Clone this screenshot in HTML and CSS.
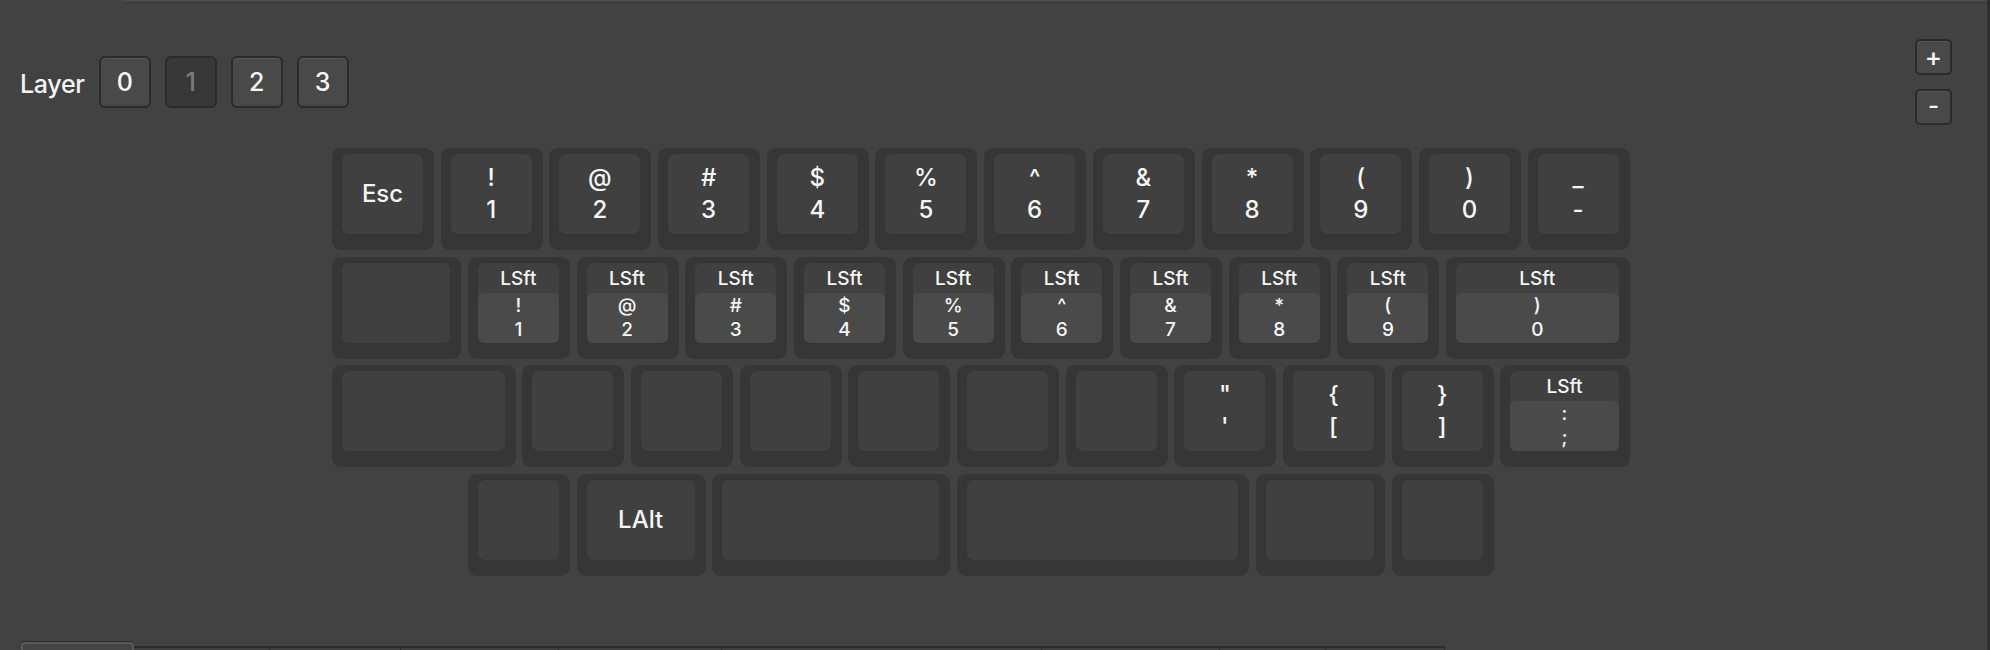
FILE: index.html
```html
<!DOCTYPE html>
<html>
<head>
<meta charset="utf-8">
<link rel="stylesheet" href="styles.css">
</head>
<body>
<div class="app">
  <div class="topline"></div>
  <header class="toolbar">
    <div class="layers">
      <span class="layer-label">Layer</span>
      <div class="layer-btn">0</div>
      <div class="layer-btn active">1</div>
      <div class="layer-btn">2</div>
      <div class="layer-btn">3</div>
    </div>
    <div class="zoom-btns">
      <div class="zbtn">+</div>
      <div class="zbtn minus">-</div>
    </div>
  </header>

  <div class="keyboard">
    <div class="row">
      <div class="key w100"><div class="cap"><span>Esc</span></div></div>
      <div class="key w100"><div class="cap"><span>!</span><span>1</span></div></div>
      <div class="key w100"><div class="cap"><span>@</span><span>2</span></div></div>
      <div class="key w100"><div class="cap"><span>#</span><span>3</span></div></div>
      <div class="key w100"><div class="cap"><span>$</span><span>4</span></div></div>
      <div class="key w100"><div class="cap"><span>%</span><span>5</span></div></div>
      <div class="key w100"><div class="cap"><span>^</span><span>6</span></div></div>
      <div class="key w100"><div class="cap"><span>&amp;</span><span>7</span></div></div>
      <div class="key w100"><div class="cap"><span>*</span><span>8</span></div></div>
      <div class="key w100"><div class="cap"><span>(</span><span>9</span></div></div>
      <div class="key w100"><div class="cap"><span>)</span><span>0</span></div></div>
      <div class="key w100"><div class="cap"><span>_</span><span>-</span></div></div>
    </div>
    <div class="row">
      <div class="key w125"><div class="cap"></div></div>
      <div class="key w100"><div class="cap hold"><div class="hold-label">LSft</div><div class="tap"><span>!</span><span>1</span></div></div></div>
      <div class="key w100"><div class="cap hold"><div class="hold-label">LSft</div><div class="tap"><span>@</span><span>2</span></div></div></div>
      <div class="key w100"><div class="cap hold"><div class="hold-label">LSft</div><div class="tap"><span>#</span><span>3</span></div></div></div>
      <div class="key w100"><div class="cap hold"><div class="hold-label">LSft</div><div class="tap"><span>$</span><span>4</span></div></div></div>
      <div class="key w100"><div class="cap hold"><div class="hold-label">LSft</div><div class="tap"><span>%</span><span>5</span></div></div></div>
      <div class="key w100"><div class="cap hold"><div class="hold-label">LSft</div><div class="tap"><span>^</span><span>6</span></div></div></div>
      <div class="key w100"><div class="cap hold"><div class="hold-label">LSft</div><div class="tap"><span>&amp;</span><span>7</span></div></div></div>
      <div class="key w100"><div class="cap hold"><div class="hold-label">LSft</div><div class="tap"><span>*</span><span>8</span></div></div></div>
      <div class="key w100"><div class="cap hold"><div class="hold-label">LSft</div><div class="tap"><span>(</span><span>9</span></div></div></div>
      <div class="key w175"><div class="cap hold"><div class="hold-label">LSft</div><div class="tap"><span>)</span><span>0</span></div></div></div>
    </div>
    <div class="row">
      <div class="key w175"><div class="cap"></div></div>
      <div class="key w100"><div class="cap"></div></div>
      <div class="key w100"><div class="cap"></div></div>
      <div class="key w100"><div class="cap"></div></div>
      <div class="key w100"><div class="cap"></div></div>
      <div class="key w100"><div class="cap"></div></div>
      <div class="key w100"><div class="cap"></div></div>
      <div class="key w100"><div class="cap"><span>"</span><span>'</span></div></div>
      <div class="key w100"><div class="cap"><span>{</span><span>[</span></div></div>
      <div class="key w100"><div class="cap"><span>}</span><span>]</span></div></div>
      <div class="key w125"><div class="cap hold"><div class="hold-label">LSft</div><div class="tap"><span>:</span><span>;</span></div></div></div>
    </div>
    <div class="row row-offset">
      <div class="key w100"><div class="cap"></div></div>
      <div class="key w125"><div class="cap"><span>LAlt</span></div></div>
      <div class="key w225"><div class="cap"></div></div>
      <div class="key w275"><div class="cap"></div></div>
      <div class="key w125"><div class="cap"></div></div>
      <div class="key w100"><div class="cap"></div></div>
    </div>
  </div>

  <div class="tabs">
    <div class="tab selected t1"></div>
    <div class="tab t2"></div>
    <div class="tab t3"></div>
    <div class="tab t4"></div>
    <div class="tab t5"></div>
    <div class="tab t6"></div>
    <div class="tab t7"></div>
    <div class="tab t8"></div>
    <div class="tab t9"></div>
  </div>
</div>
</body>
</html>
```

FILE: styles.css
```css
* { box-sizing: border-box; }

html, body {
  margin: 0;
  padding: 0;
  background: #424242;
  overflow: hidden;
}

body {
  font-family: "Inter", "Liberation Sans", sans-serif;
  color: #f2f2f2;
}

.app {
  --u: 108.7px;
  --g: 6.7px;
  width: 1990px;
  height: 650px;
  overflow: hidden;
  border-right: 3px solid #2f2f2f;
  display: flex;
  flex-direction: column;
}

.topline {
  margin-left: 123px;
  height: 3px;
  background: #4a4a4a;
  border-bottom: 1px solid #383838;
  flex: none;
}

/* toolbar */
.toolbar {
  margin-top: 36px;
  height: 85px;
  display: flex;
  align-items: center;
  justify-content: space-between;
  padding-left: 20px;
  padding-right: 35px;
  flex: none;
}

.layers {
  display: flex;
  align-items: center;
  gap: 14px;
}

.layer-label {
  font-size: 25px;
  font-weight: 500;
  letter-spacing: -0.3px;
  margin-top: 4px;
}

.layer-btn {
  width: 52px;
  height: 52px;
  border-radius: 6px;
  border: 2px solid #2b2b2b;
  background: #494949;
  box-shadow: inset 0 1px 0 #565656;
  display: flex;
  align-items: center;
  justify-content: center;
  font-size: 25px;
  font-weight: 500;
  color: #f6f6f6;
}

.layer-btn.active {
  background: #383838;
  box-shadow: none;
  color: #7c7c7c;
}

.zoom-btns {
  display: flex;
  flex-direction: column;
  gap: 14px;
}

.zbtn {
  width: 37px;
  height: 36px;
  border-radius: 5px;
  border: 2px solid #2b2b2b;
  background: #494949;
  box-shadow: inset 0 1px 0 #565656;
  display: flex;
  align-items: center;
  justify-content: center;
  font-size: 26px;
  font-weight: 500;
  color: #f6f6f6;
  line-height: 1;
}

.zbtn.minus {
  font-size: 24px;
  padding-bottom: 2px;
}

/* keyboard */
.keyboard {
  margin-top: 24px;
  margin-left: 332px;
  display: flex;
  flex-direction: column;
  gap: var(--g);
  flex: none;
}

.row {
  display: flex;
  gap: var(--g);
}

.row-offset {
  margin-left: calc(var(--u) * 1.25);
}

.key {
  height: 102px;
  background: #363636;
  border-radius: 9px;
  padding: 6px 11px 16px 10px;
  flex: none;
}

.w100 { width: calc(var(--u) * 1 - var(--g)); }
.w125 { width: calc(var(--u) * 1.25 - var(--g)); }
.w175 { width: calc(var(--u) * 1.75 - var(--g)); }
.w225 { width: calc(var(--u) * 2.25 - var(--g)); }
.w275 { width: calc(var(--u) * 2.75 - var(--g)); }

.cap {
  height: 100%;
  background: #404040;
  border-radius: 7px;
  display: flex;
  flex-direction: column;
  align-items: center;
  justify-content: center;
  font-size: 24px;
  font-weight: 500;
  line-height: 32px;
  color: #f6f6f6;
}

.cap.hold {
  justify-content: flex-start;
  align-items: stretch;
}

.hold-label {
  height: 30px;
  flex: none;
  display: flex;
  align-items: center;
  justify-content: center;
  font-size: 19px;
  line-height: 1;
  padding-top: 1px;
}

.tap {
  flex: 1;
  background: #4a4a4a;
  border-radius: 6px;
  display: flex;
  flex-direction: column;
  align-items: center;
  justify-content: center;
  font-size: 19px;
  line-height: 24px;
}

/* bottom tabs */
.tabs {
  margin-top: 66px;
  padding-left: 21px;
  display: flex;
  align-items: flex-start;
  flex: none;
}

.tab {
  height: 20px;
  margin-top: 4px;
  border-top: 2px solid #2c2c2c;
  border-left: 1px solid #2c2c2c;
  background: #3f3f3f;
}

.tab.selected {
  margin-top: 0;
  border: 2px solid #5a5a5a;
  border-bottom: none;
  border-radius: 4px 4px 0 0;
  background: #444444;
  box-shadow: 0 -1px 0 #2a2a2a;
}

.t1 { width: 113px; }
.t2 { width: 135px; border-left: none; }
.t3 { width: 131px; }
.t4 { width: 158px; }
.t5 { width: 163px; }
.t6 { width: 320px; }
.t7 { width: 178px; }
.t8 { width: 106px; }
.t9 { width: 120px; border-right: 1px solid #2c2c2c; }
```
